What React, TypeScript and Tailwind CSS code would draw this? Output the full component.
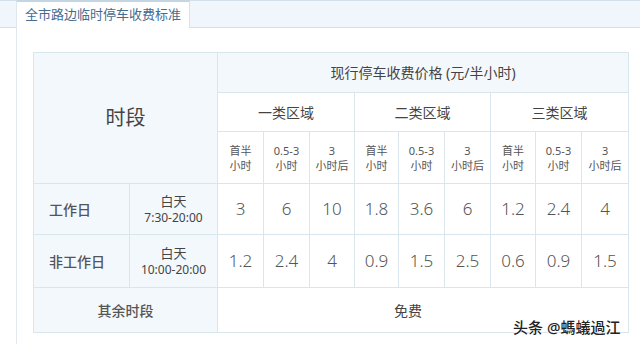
const FONT = "font-['Noto_Sans','Noto_Sans_CJK_SC',sans-serif]"

const widths = [96, 88, 46, 46, 45, 44, 46, 46, 45, 46, 47]

const subHeads = [
  ["首半", "小时"],
  ["0.5-3", "小时"],
  ["3", "小时后"],
]

const zones = ["一类区域", "二类区域", "三类区域"]

const rows = [
  { day: "工作日", time: "7:30-20:00", prices: ["3", "6", "10", "1.8", "3.6", "6", "1.2", "2.4", "4"], h: "h-[51px]" },
  { day: "非工作日", time: "10:00-20:00", prices: ["1.2", "2.4", "4", "0.9", "1.5", "2.5", "0.6", "0.9", "1.5"], h: "h-[53px]" },
]

const cell = "border border-[#d9e6ee] p-0 align-middle"

export default function App() {
  return (
    <div className={`relative w-[640px] h-[344px] overflow-hidden bg-white ${FONT}`}>
      {/* tab bar */}
      <div className="flex h-[28px] bg-[#f1f6fc] border-t border-[#d3e1ec] border-b">
        <div className="ml-[16px] w-[174px] h-[28px] -mt-px bg-white border-t-2 border-t-[#c4d6e4] border-l border-l-[#dfe8ef] border-r border-r-[#d6e2ec] flex items-center pl-[8px] text-[13px] text-[#456b8f]">
          全市路边临时停车收费标准
        </div>
      </div>

      {/* panel */}
      <div className="ml-[16px] h-[316px] border-l border-[#e1e9ef] pl-[16px] pt-[24px]">
        <table className="border-collapse table-fixed w-[595px] text-[#444]">
          <colgroup>
            {widths.map((w, i) => (
              <col key={i} style={{ width: w }} />
            ))}
          </colgroup>
          <tbody>
            <tr className="h-[40px]">
              <td colSpan={2} rowSpan={3} className={`${cell} bg-[#f3f8fd] text-center text-[20px] text-[#444]`}>
                时段
              </td>
              <td colSpan={9} className={`${cell} bg-[#f3f8fd] text-center text-[14px] text-[#444]`}>
                现行停车收费价格 (元/半小时)
              </td>
            </tr>
            <tr className="h-[39px]">
              {zones.map((z) => (
                <td key={z} colSpan={3} className={`${cell} bg-white text-center text-[14px] text-[#444]`}>
                  {z}
                </td>
              ))}
            </tr>
            <tr className="h-[52px]">
              {zones.map((z) =>
                subHeads.map((s, i) => (
                  <td key={z + i} className={`${cell} bg-white text-center text-[11px] leading-[15px] text-[#555]`}>
                    <div>{s[0]}</div>
                    <div>{s[1]}</div>
                  </td>
                ))
              )}
            </tr>
            {rows.map((r) => (
              <tr key={r.day} className={r.h}>
                <td className={`${cell} bg-[#f3f8fd] pl-[15px] text-left text-[14px] font-medium text-[#555]`}>{r.day}</td>
                <td className={`${cell} bg-[#f3f8fd] text-center text-[#444]`}>
                  <div className="text-[13px] leading-[18px]">白天</div>
                  <div className="text-[12px] leading-[16px]">{r.time}</div>
                </td>
                {r.prices.map((p, i) => (
                  <td key={i} className={`${cell} bg-white text-center text-[17px] font-light text-[#555]`}>
                    {p}
                  </td>
                ))}
              </tr>
            ))}
            <tr className="h-[45px]">
              <td colSpan={2} className={`${cell} bg-[#f3f8fd] text-center text-[14px] font-medium text-[#555]`}>
                其余时段
              </td>
              <td colSpan={9} className={`${cell} bg-white text-center text-[14px] text-[#444] pr-[30px]`}>
                免费
              </td>
            </tr>
          </tbody>
        </table>
      </div>

      {/* watermark */}
      <div className="absolute left-[513px] top-[316px] text-[15px] font-medium text-[#222] [text-shadow:0_0_2px_#fff,0_0_2px_#fff]">
        头条 @螞蟻過江
      </div>
    </div>
  )
}
